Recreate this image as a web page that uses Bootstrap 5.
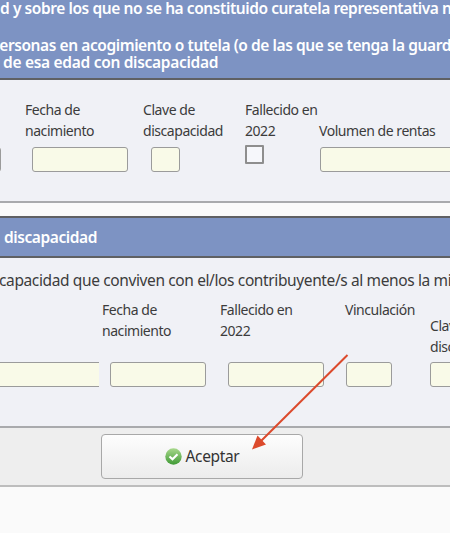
<html lang="es">
<head>
  <meta charset="UTF-8">
  <meta name="viewport" content="width=device-width, initial-scale=1.0">
  <title>Discapacidad</title>
  <link href="https://cdn.jsdelivr.net/npm/bootstrap@5.3.0/dist/css/bootstrap.min.css" rel="stylesheet">
  <style>
    html, body { height: 533px; overflow: hidden; }
    body { font-family: "Noto Sans", "Open Sans", sans-serif; background: #fafafa; color: #3c3c3c; position: relative; width: 450px; }
    .hoja { white-space: nowrap; overflow: hidden; }
    .cabecera { background: #7d93c3; color: #fff; font-weight: 600; font-size: 15.5px; line-height: 17px; letter-spacing: -.42px; border-bottom: 2px solid #5f6063; }
    .cab-a { height: 80px; }
    .cab-a .t2 { margin-top: 20px; margin-left: -10px; }
    .cab-a .t3 { margin-left: -8px; letter-spacing: -.3px; }
    .cab-b { height: 42px; line-height: 38px; border-top: 2px solid #5f6063; margin-top: 13px; padding-left: 4px; }
    .panel-claro { background: #f0f1f6; font-size: 14px; line-height: 21px; letter-spacing: -.45px; overflow: hidden; }
    .panel-a { height: 123px; border-bottom: 2px solid #a9aaad; padding-top: 19px; }
    .panel-b { height: 170px; border-bottom: 2px solid #a9aaad; }
    .frase { font-size: 15.5px; letter-spacing: -.38px; margin: 12px 0 0 -1px; }
    .campo { flex: none; }
    .caja { display: block; height: 25px; background: #f9fae8; border: 1px solid #9b9b9b; border-radius: 3px; }
    .sep { margin-top: 6px; }
    .marca-vacia { display: block; width: 19px; height: 19px; margin-top: 4px; background: #f6f7fb; border: 2px solid #8e8e8e; border-radius: 1px; }
    .fila { align-items: flex-end; }
    .fila-a { margin-left: -6px; height: 73px; }
    .fila-b { margin-top: 8px; height: 88px; margin-left: -4px; }
    .pie { height: 59px; background: #eeeeee; border-bottom: 2px solid #bdbdbd; padding-top: 6px; padding-left: 101px; }
    .boton-aceptar { width: 202px; height: 45px; padding: 0; font-size: 15.5px; letter-spacing: -.35px; color: #333; border: 1px solid #a8a8a8; border-radius: 4px; background: linear-gradient(#fdfdfd, #ececec); }
    .flecha { position: absolute; left: 0; top: 0; pointer-events: none; }
    .a1 { width: 31px; } .a1 .caja { width: 7px; }
    .a2 { width: 118px; } .a2 .caja { width: 96px; margin-left: 7px; }
    .a3 { width: 102px; } .a3 .caja { width: 29px; margin-left: 8px; }
    .a4 { width: 74px; }
    .a5 { width: 140px; } .a5 .caja { margin-left: 1px; }
    .b1 { width: 106px; } .b1 .caja { width: 103px; border-radius: 0; border-right: 0; }
    .b2 { width: 118px; } .b2 .caja { width: 96px; margin-left: 8px; }
    .b3 { width: 125px; } .b3 .caja { width: 96px; margin-left: 8px; }
    .b4 { width: 85px; } .b4 .caja { width: 46px; margin-left: 1px; }
    .b5 { width: 60px; } .b5 .caja { margin-top: 5px; }
  </style>
</head>
<body>
  <div class="hoja">
    <div class="cabecera cab-a">
      <div>d y sobre los que no se ha constituido curatela representativa n</div>
      <div class="t2">personas en acogimiento o tutela (o de las que se tenga la guarda</div>
      <div class="t3">s de esa edad con discapacidad</div>
    </div>
    <div class="panel-claro panel-a">
      <div class="d-flex fila fila-a">
        <div class="campo a1"><span class="caja"></span></div>
        <div class="campo a2">Fecha de<br>nacimiento<span class="caja sep"></span></div>
        <div class="campo a3">Clave de<br>discapacidad<span class="caja sep"></span></div>
        <div class="campo a4 align-self-start">Fallecido en<br>2022<span class="marca-vacia"></span></div>
        <div class="campo a5">Volumen de rentas<span class="caja sep"></span></div>
      </div>
    </div>
    <div class="cabecera cab-b">discapacidad</div>
    <div class="panel-claro panel-b">
      <div class="frase">capacidad que conviven con el/los contribuyente/s al menos la mi</div>
      <div class="d-flex fila fila-b">
        <div class="campo b1"><span class="caja"></span></div>
        <div class="campo b2 align-self-stretch d-flex flex-column justify-content-between"><div>Fecha de<br>nacimiento</div><span class="caja"></span></div>
        <div class="campo b3 align-self-stretch d-flex flex-column justify-content-between"><div>Fallecido en<br>2022</div><span class="caja"></span></div>
        <div class="campo b4 align-self-stretch d-flex flex-column justify-content-between"><div>Vinculación</div><span class="caja"></span></div>
        <div class="campo b5">Clave de<br>discapacidad<span class="caja"></span></div>
      </div>
    </div>
    <div class="pie">
      <button type="button" class="btn boton-aceptar d-inline-flex align-items-center justify-content-center gap-1">
        <svg width="17" height="17" viewBox="0 0 17 17"><defs><linearGradient id="verde" x1="0" y1="0" x2="0" y2="1"><stop offset="0" stop-color="#a8d88c"/><stop offset="1" stop-color="#3f9a35"/></linearGradient></defs><circle cx="8.5" cy="8.5" r="8.200" fill="url(#verde)"/><path d="M4.500 8.500l3 2.800 5-5" fill="none" stroke="#fff" stroke-width="2.200"/></svg>
        Aceptar
      </button>
    </div>
  </div>
  <svg class="flecha" width="450" height="533" viewBox="0 0 450 533">
    <path d="M347.500 355L258 444" stroke="#dc4a2c" stroke-width="2" fill="none"/>
    <path d="M252 449.500L257.500 435.500L266 444.500Z" fill="#dc4a2c"/>
  </svg>
</body>
</html>
